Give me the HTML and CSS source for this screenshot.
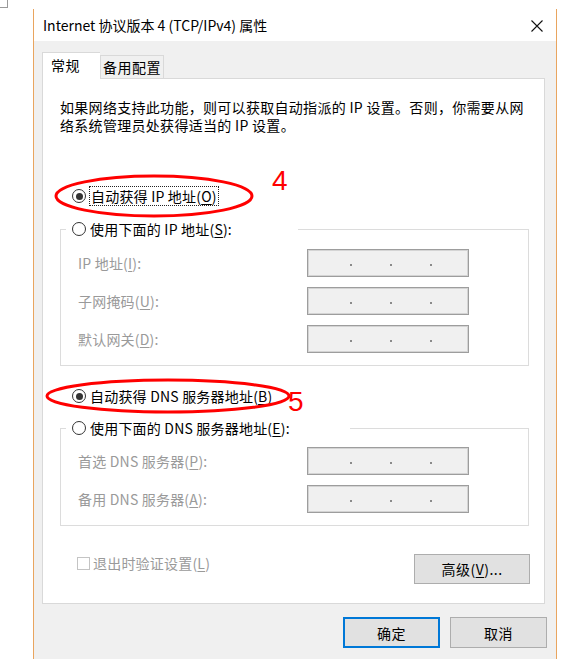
FILE: index.html
```html
<!DOCTYPE html>
<html>
<head>
    <meta charset="utf-8">
    <title>Internet 协议版本 4 (TCP/IPv4) 属性</title>
    <link rel="stylesheet" href="styles.css">
</head>
<body>
    <div class="crop-mark"></div>

    <div class="window">
        <div class="title-bar">
            <span class="title">Internet 协议版本 4 (TCP/IPv4) 属性</span>
            <svg class="close" width="12" height="12" viewBox="0 0 12 12">
                <path d="M0.5 0.5 L11.5 11.5 M11.5 0.5 L0.5 11.5" stroke="#111" stroke-width="1.1" fill="none"/>
            </svg>
        </div>

        <div class="body">
            <div class="tabs">
                <div class="tab active">常规</div>
                <div class="tab">备用配置</div>
            </div>

            <div class="panel">
                <p class="desc">如果网络支持此功能，则可以获取自动指派的 IP 设置。否则，你需要从网<br>络系统管理员处获得适当的 IP 设置。</p>

                <div class="option">
                    <span class="radio checked"></span>
                    <span class="focus">自动获得 IP 地址(<u>O</u>)</span>
                </div>

                <fieldset class="group">
                    <legend class="legend-ip"><span class="radio"></span><span>使用下面的 IP 地址(<u>S</u>):</span></legend>
                    <div class="field">
                        <span class="label">IP 地址(<u>I</u>):</span>
                        <span class="ip-box"><i></i><i></i><i></i></span>
                    </div>
                    <div class="field">
                        <span class="label">子网掩码(<u>U</u>):</span>
                        <span class="ip-box"><i></i><i></i><i></i></span>
                    </div>
                    <div class="field">
                        <span class="label">默认网关(<u>D</u>):</span>
                        <span class="ip-box"><i></i><i></i><i></i></span>
                    </div>
                </fieldset>

                <div class="option option-dns">
                    <span class="radio checked"></span>
                    <span class="plain">自动获得 DNS 服务器地址(<u>B</u>)</span>
                </div>

                <fieldset class="group group-dns">
                    <legend class="legend-dns"><span class="radio"></span><span>使用下面的 DNS 服务器地址(<u>E</u>):</span></legend>
                    <div class="field">
                        <span class="label">首选 DNS 服务器(<u>P</u>):</span>
                        <span class="ip-box"><i></i><i></i><i></i></span>
                    </div>
                    <div class="field">
                        <span class="label">备用 DNS 服务器(<u>A</u>):</span>
                        <span class="ip-box"><i></i><i></i><i></i></span>
                    </div>
                </fieldset>

                <div class="check-row">
                    <span class="check"><span class="box"></span><span>退出时验证设置(<u>L</u>)</span></span>
                    <button class="btn btn-adv">高级(<u>V</u>)...</button>
                </div>
            </div>

            <div class="actions">
                <button class="btn primary">确定</button>
                <button class="btn">取消</button>
            </div>
        </div>
    </div>

    <!-- red hand-drawn notes on top of the screenshot -->
    <svg class="notes" width="569" height="662" viewBox="0 0 569 662">
        <ellipse cx="154" cy="196" rx="98" ry="20" fill="none" stroke="#ff0000" stroke-width="3"/>
        <ellipse cx="168" cy="396" rx="121" ry="16" fill="none" stroke="#ff0000" stroke-width="3"/>
        <text x="272" y="190" class="note-num">4</text>
        <text x="288" y="411" class="note-num">5</text>
    </svg>
</body>
</html>
```

FILE: styles.css
```css
* {
    box-sizing: border-box;
}
body {
    margin: 0;
    background: #fff;
    font-family: "Segoe UI", "Noto Sans CJK SC", sans-serif;
    font-size: 14px;
    color: #000;
    position: relative;
}
u {
    text-decoration: underline;
    text-underline-offset: 2px;
}
.crop-mark {
    position: absolute;
    top: 0;
    left: 0;
    width: 8px;
    height: 8px;
    border-right: 1px solid #9a9a9a;
    border-bottom: 1px solid #9a9a9a;
}
.window {
    margin: 9px 0 0 33px;
    width: 524px;
    height: 650px;
    background: #f0f0f0;
    border-left: 1px solid #e9a55f;
    border-right: 1px solid #e9a55f;
}
.title-bar {
    height: 32px;
    background: #fff;
    display: flex;
    align-items: center;
    justify-content: space-between;
    padding: 0 13px 0 9px;
}
.title {
    font-size: 14px;
}
.close {
    margin-top: 1px;
}
.body {
    padding: 11px 11px 0 8px;
}
.tabs {
    display: flex;
    align-items: flex-end;
    height: 26px;
}
.tab {
    height: 23px;
    width: 64px;
    border: 1px solid #d9d9d9;
    border-bottom: none;
    background: #f0f0f0;
    text-align: center;
    line-height: 22px;
    letter-spacing: 0.5px;
}
.tab.active {
    position: relative;
    z-index: 1;
    height: 27px;
    width: 58px;
    margin-bottom: -1px;
    background: #fff;
    text-align: left;
    padding-left: 8px;
    line-height: 24px;
    border-right: none;
}
.panel {
    background: #fff;
    border: 1px solid #d9d9d9;
    padding: 0 15px 19px 17px;
}
.desc {
    margin: 19px 0 0;
    line-height: 18px;
    letter-spacing: 0.3px;
    white-space: nowrap;
}
.option {
    display: flex;
    align-items: center;
    height: 20px;
    margin: 52px 0 0 12px;
    letter-spacing: 0.2px;
}
.option-dns {
    margin-top: 20px;
}
.radio {
    display: inline-block;
    width: 14px;
    height: 14px;
    border: 1px solid #333;
    border-radius: 50%;
    background: #fff;
    flex: none;
    position: relative;
}
.radio.checked::after {
    content: "";
    position: absolute;
    left: 2.5px;
    top: 2.5px;
    width: 7px;
    height: 7px;
    border-radius: 50%;
    background: #333;
}
.focus {
    margin-left: 3px;
    padding: 0 1px 0 1px;
    height: 20px;
    line-height: 18px;
    border: 1px dotted #222;
}
.plain {
    margin-left: 4px;
}
.group {
    margin: 13px 0 0;
    padding: 10px 0 12px 17px;
    border: 1px solid #dcdcdc;
    min-width: 0;
}
.group-dns {
    margin-top: 12px;
    padding-top: 9px;
}
.group legend {
    display: flex;
    align-items: center;
    gap: 4px;
    height: 20px;
    padding: 0 0 0 6px;
    margin-left: -12px;
    letter-spacing: 0.2px;
}
.legend-ip {
    width: 232px;
}
.legend-dns {
    width: 284px;
}
.field {
    display: flex;
    align-items: center;
    height: 28px;
    margin-bottom: 10px;
    color: #9a9a9a;
    letter-spacing: 0.2px;
}
.field:last-child {
    margin-bottom: 0;
}
.label {
    width: 229px;
}
.ip-box {
    width: 162px;
    height: 28px;
    border: 1px solid #9d9d9d;
    box-shadow: inset 0 0 0 1px #d4d4d4;
    background: #f0f0f0;
    display: flex;
    align-items: center;
    gap: 38px;
    padding: 3px 0 0 42px;
}
.ip-box i {
    width: 2px;
    height: 2px;
    background: #8a8a8a;
}
.check-row {
    display: flex;
    align-items: flex-start;
    justify-content: space-between;
    margin-top: 28px;
    padding-left: 17px;
}
.check {
    display: flex;
    align-items: center;
    gap: 3px;
    height: 20px;
    margin-top: -1px;
    color: #9a9a9a;
    letter-spacing: 0.2px;
}
.check .box {
    width: 13px;
    height: 13px;
    border: 1px solid #c4c4c4;
    background: #fff;
}
.btn {
    font-family: inherit;
    font-size: 14px;
    color: #000;
    background: #e1e1e1;
    border: 1px solid #adadad;
    width: 97px;
    height: 31px;
    padding: 0;
    letter-spacing: 0.5px;
}
.btn-adv {
    width: 116px;
    height: 30px;
    margin-right: -1px;
}
.primary {
    border: 2px solid #0078d7;
}
.actions {
    display: flex;
    justify-content: flex-end;
    gap: 10px;
    margin: 13px -2px 0 0;
}
.notes {
    position: absolute;
    top: 0;
    left: 0;
    pointer-events: none;
}
.note-num {
    font-family: "Liberation Sans", sans-serif;
    font-size: 28px;
    fill: #ff0000;
}
```
